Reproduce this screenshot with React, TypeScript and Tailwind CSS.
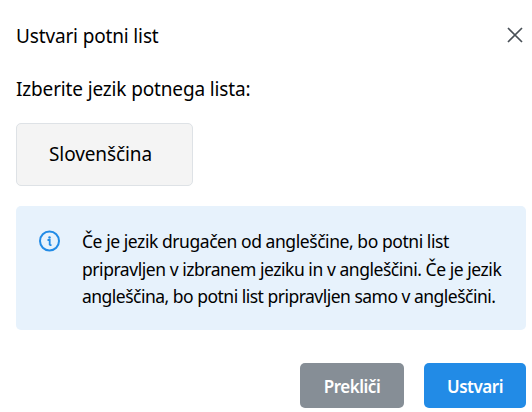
import React, { useState } from 'react';

const LANGUAGE = 'Slovenščina';

const INFO_LINES = [
  { text: 'Če je jezik drugačen od angleščine, bo potni list', className: 'tracking-[-0.44px]' },
  { text: 'pripravljen v izbranem jeziku in v angleščini. Če je jezik', className: 'tracking-[-0.455px]' },
  { text: 'angleščina, bo potni list pripravljen samo v angleščini.', className: 'tracking-[-0.51px]' },
];

function CloseIcon() {
  return (
    <svg width="18" height="18" viewBox="0 0 18 18" fill="none" stroke="#495057" strokeWidth="1.7">
      <path d="M2 2L16 16M16 2L2 16" />
    </svg>
  );
}

function InfoIcon() {
  return (
    <svg width="22" height="22" viewBox="0 0 22 22" fill="none" stroke="#228be6">
      <circle cx="10.5" cy="11" r="9.5" strokeWidth="2" />
      <path d="M8.5 10H10.7V15M10.5 15.2H12.5" strokeWidth="1.8" />
      <circle cx="10.5" cy="7.4" r="1.25" fill="#228be6" stroke="none" />
    </svg>
  );
}

function App() {
  const [open, setOpen] = useState(true);

  if (!open) return null;

  return (
    <div className="h-[412px] w-[532px] overflow-hidden bg-white pt-4 pr-1.5 pl-4 font-['Noto_Sans',sans-serif] text-[19px] text-black">
      <header className="flex h-10 items-center justify-between">
        <h2 className="tracking-[-0.15px]">Ustvari potni list</h2>
        <button type="button" aria-label="Zapri" className="mr-0.5 mb-[3px]" onClick={() => setOpen(false)}>
          <CloseIcon />
        </button>
      </header>

      <p className="mt-[19px] h-7 leading-7 tracking-[-0.15px]">Izberite jezik potnega lista:</p>

      <div className="mt-5 flex h-[63px] w-[177px] items-center rounded-[5px] border border-[#dee2e6] bg-[#f4f4f4] pl-8">
        <span className="tracking-[-0.1px]">{LANGUAGE}</span>
      </div>

      <div className="mt-5 flex h-[124px] gap-[21px] rounded-[5px] bg-[#e7f2fc] pt-[22px] pl-[23px]">
        <div className="mt-0.5 shrink-0">
          <InfoIcon />
        </div>
        <div className="text-[17.5px] leading-[27.5px] whitespace-nowrap">
          {INFO_LINES.map((line) => (
            <p key={line.text} className={line.className}>{line.text}</p>
          ))}
        </div>
      </div>

      <footer className="mt-[33px] flex justify-end gap-5 text-[17px] font-semibold tracking-[-0.5px] text-white">
        <button
          type="button"
          className="h-[45px] w-[104px] rounded-[5px] bg-[#868e96] pt-0.5"
          onClick={() => setOpen(false)}
        >
          Prekliči
        </button>
        <button type="button" className="h-[45px] w-[102px] rounded-[5px] bg-[#228be6] pt-0.5">
          Ustvari
        </button>
      </footer>
    </div>
  );
}

export default App;
